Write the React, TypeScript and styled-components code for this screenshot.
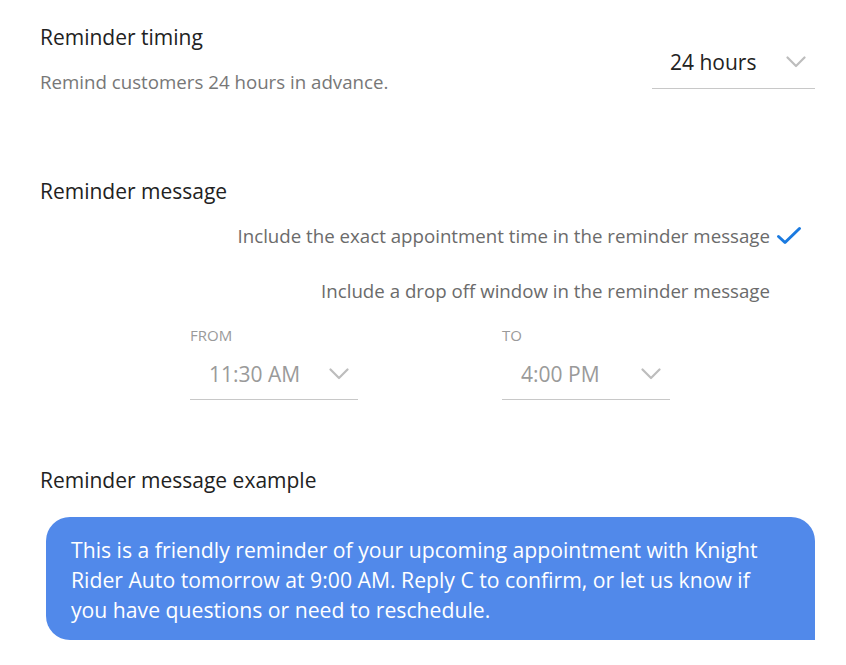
import styled, { createGlobalStyle } from "styled-components";

const GlobalStyle = createGlobalStyle`
    body {
        margin: 0;
        background: #ffffff;
        font-family: "Open Sans", "Liberation Sans", sans-serif;
    }
`

const Page = styled.main`
    width: 846px;
    height: 665px;
    box-sizing: border-box;
    padding: 23px 31px 0 40px;
`

const SectionRow = styled.div`
    display: flex;
    justify-content: space-between;
    align-items: flex-start;
`

const Title = styled.h2<{ $top?: number }>`
    margin: ${props => props.$top ?? 0}px 0 0;
    font-size: 21px;
    font-weight: 400;
    line-height: 28px;
    color: #222;
`

const Subtitle = styled.p`
    margin: 18px 0 0;
    font-size: 18.7px;
    line-height: 26px;
    color: #777;
`

const Select = styled.div<{ $width: number; $height: number; $top: number; $muted?: boolean }>`
    display: flex;
    align-items: center;
    justify-content: space-between;
    width: ${props => props.$width}px;
    height: ${props => props.$height}px;
    margin-top: ${props => props.$top}px;
    box-sizing: border-box;
    padding: 0 9px 0 ${props => props.$muted ? 19 : 18}px;
    border-bottom: 1px solid #c8c8c8;
    font-size: 21px;
    color: ${props => props.$muted ? "#9a9a9a" : "#222"};
`

const Chevron = () => (
    <svg width="20" height="12" viewBox="0 0 20 12" fill="none">
        <path d="M1.5 1.5 L10 10 L18.5 1.5" stroke="#bdbdbd" strokeWidth="2.2" strokeLinecap="round" strokeLinejoin="round" />
    </svg>
)

const Options = styled.div`
    display: flex;
    flex-direction: column;
    align-items: flex-end;
    gap: 29px;
    margin-top: 18px;
    padding-right: 13px;
`

const Option = styled.div`
    display: flex;
    align-items: center;
    font-size: 18.7px;
    line-height: 26px;
    color: #6b6b6b;
`

const CheckSlot = styled.span`
    display: flex;
    align-items: center;
    justify-content: flex-end;
    width: 32px;
    height: 26px;
`

const Check = () => (
    <svg width="26" height="20" viewBox="0 0 26 20" fill="none">
        <path d="M2.5 10.5 L9 16.5 L23.5 2.5" stroke="#1a7ae0" strokeWidth="3" strokeLinecap="round" strokeLinejoin="round" />
    </svg>
)

const Window = styled.div`
    display: flex;
    gap: 144px;
    margin: 21px 0 0 150px;
`

const Field = styled.div`
    display: flex;
    flex-direction: column;
`

const FieldLabel = styled.span`
    font-size: 15px;
    line-height: 20px;
    color: #9a9a9a;
    text-transform: uppercase;
`

const Bubble = styled.div`
    margin: 23px 0 0 6px;
    padding: 18px 40px 15px 25px;
    background: #5189ea;
    border-radius: 24px 24px 0 24px;
    color: #fff;
    font-size: 21.2px;
    line-height: 30px;
`

export default function App() {
    return (
        <>
            <GlobalStyle />
            <Page>
                <SectionRow>
                    <div>
                        <Title>Reminder timing</Title>
                        <Subtitle>Remind customers 24 hours in advance.</Subtitle>
                    </div>
                    <Select $width={163} $height={54} $top={12}>
                        24 hours
                        <Chevron />
                    </Select>
                </SectionRow>

                <Title $top={82}>Reminder message</Title>
                <Options>
                    <Option>
                        Include the exact appointment time in the reminder message
                        <CheckSlot><Check /></CheckSlot>
                    </Option>
                    <Option>
                        Include a drop off window in the reminder message
                        <CheckSlot />
                    </Option>
                </Options>

                <Window>
                    <Field>
                        <FieldLabel>From</FieldLabel>
                        <Select $width={168} $height={52} $top={3} $muted>
                            11:30 AM
                            <Chevron />
                        </Select>
                    </Field>
                    <Field>
                        <FieldLabel>To</FieldLabel>
                        <Select $width={168} $height={52} $top={3} $muted>
                            4:00 PM
                            <Chevron />
                        </Select>
                    </Field>
                </Window>

                <Title $top={66}>Reminder message example</Title>
                <Bubble>
                    This is a friendly reminder of your upcoming appointment with Knight Rider Auto tomorrow at 9:00 AM. Reply C to confirm, or let us know if you have questions or need to reschedule.
                </Bubble>
            </Page>
        </>
    )
}
